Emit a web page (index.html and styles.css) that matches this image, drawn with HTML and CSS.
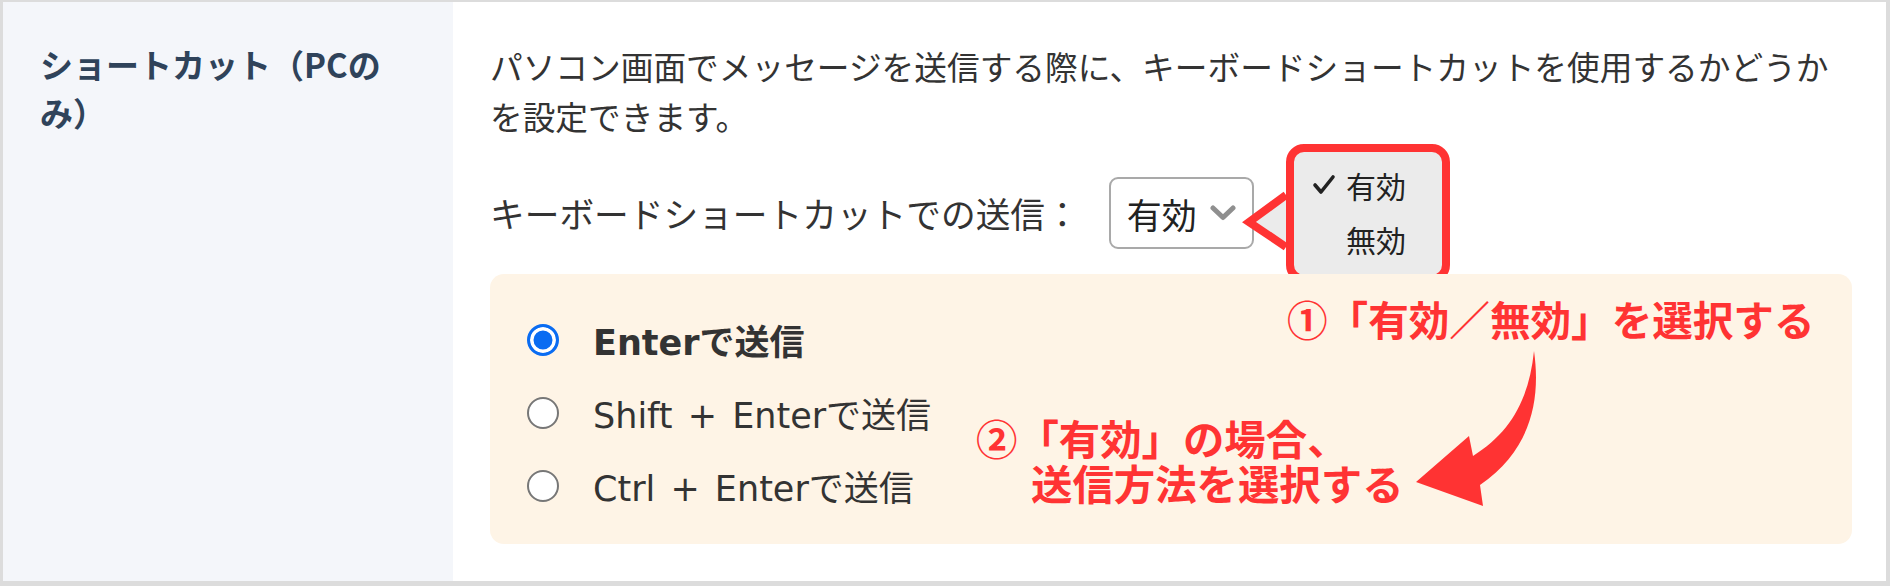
FILE: index.html
```html
<!DOCTYPE html>
<html lang="ja">
<head>
<meta charset="utf-8">
<title>ショートカット設定</title>
<link rel="stylesheet" href="styles.css">
</head>
<body>
<div class="frame">
  <div class="side">
    <h2 class="side-title">ショートカット（PCのみ）</h2>
  </div>
  <div class="main">
    <p class="desc">パソコン画面でメッセージを送信する際に、キーボードショートカットを使用するかどうかを設定できます。</p>
    <div class="field">
      <span class="field-label">キーボードショートカットでの送信：</span>
      <div class="select">
        <span class="select-value">有効</span>
        <svg class="chevron" width="26" height="18" viewBox="0 0 26 18"><polyline points="3,4 13,13.5 23,4" fill="none" stroke="#8f8f8f" stroke-width="5" stroke-linecap="round" stroke-linejoin="round"/></svg>
      </div>
      <div class="menu">
        <svg class="menu-pointer" width="60" height="80" viewBox="0 0 60 80"><path d="M45 10 L8 37 L45 62 Z" fill="#ebebeb"/><polyline points="45,10 8,37 45,62" fill="none" stroke="#ff3333" stroke-width="8" stroke-linejoin="miter"/></svg>
        <div class="menu-item"><svg class="check" width="24" height="22" viewBox="0 0 24 22"><polyline points="3,11 9,18 21,3" fill="none" stroke="#222" stroke-width="3.6" stroke-linecap="round" stroke-linejoin="round"/></svg><span>有効</span></div>
        <div class="menu-item"><span class="check-space"></span><span>無効</span></div>
      </div>
    </div>
    <div class="options">
      <label class="option option-selected"><input type="radio" name="send" checked><span>Enterで送信</span></label>
      <label class="option"><input type="radio" name="send"><span>Shift + Enterで送信</span></label>
      <label class="option"><input type="radio" name="send"><span>Ctrl + Enterで送信</span></label>
      <p class="note note-one">①「有効／無効」を選択する</p>
      <p class="note note-two"><span class="note-line">②「有効」の場合、</span><span class="note-line note-indent">送信方法を選択する</span></p>
      <svg class="arrow" width="140" height="170" viewBox="0 0 140 170"><path d="M124 6 C131 55 121 105 70 140 L73 161 L6 137 L59 91 L63 111 C100 88 119 55 124 6 Z" fill="#ff3333"/></svg>
    </div>
  </div>
</div>
</body>
</html>
```

FILE: styles.css
```css
* {
  box-sizing: border-box;
  margin: 0;
  padding: 0;
}

html,
body {
  width: 1890px;
  height: 586px;
  overflow: hidden;
  background: #ffffff;
}

body {
  font-family: "Noto Sans CJK JP", sans-serif;
  color: #333333;
}

.frame {
  display: flex;
  width: 1890px;
  height: 586px;
  border-style: solid;
  border-color: #dcdcdc;
  border-width: 2px 4px 5px 3px;
}

.side {
  flex: 0 0 450px;
  background: #f4f6fa;
  padding: 38px 37px 0 37px;
}

.side-title {
  font-size: 33px;
  font-weight: 700;
  line-height: 48px;
  color: #2f435a;
}

.main {
  flex: 1;
  padding: 39px 34px 0 37px;
}

.desc {
  font-size: 32.7px;
  line-height: 50px;
  color: #333333;
}

.field {
  position: relative;
  display: flex;
  align-items: center;
  gap: 29px;
  margin-top: 36px;
  height: 72px;
}

.field-label {
  font-size: 34.7px;
  line-height: 72px;
  color: #333333;
}

.select {
  display: flex;
  align-items: center;
  width: 145px;
  height: 72px;
  border: 2px solid #a9a9a9;
  border-radius: 9px;
  background: #ffffff;
  padding-left: 16px;
}

.select-value {
  font-size: 35px;
  line-height: 1;
  color: #222222;
}

.chevron {
  margin-left: 13px;
}

.menu {
  position: absolute;
  left: 796px;
  top: -33px;
  width: 164px;
  height: 139px;
  border: 8px solid #ff3333;
  border-radius: 18px;
  background: #ebebeb;
  padding: 6px 0 0 18px;
}

.menu-pointer {
  position: absolute;
  left: -53px;
  top: 33px;
}

.menu-item {
  display: flex;
  align-items: center;
  height: 54px;
  font-size: 30px;
  color: #222222;
}

.check {
  margin-right: 10px;
}

.check-space {
  display: inline-block;
  width: 34px;
}

.options {
  position: relative;
  margin-top: 25px;
  height: 270px;
  background: #fef4e6;
  border-radius: 14px;
  padding: 29px 0 0 37px;
}

.option {
  display: flex;
  align-items: center;
  width: max-content;
  height: 73px;
  font-family: "DejaVu Sans", "Noto Sans CJK JP", sans-serif;
  font-size: 35px;
  word-spacing: 4px;
  color: #333333;
}

.option-selected {
  font-weight: 700;
}

.option input {
  appearance: none;
  -webkit-appearance: none;
  flex: 0 0 32px;
  width: 32px;
  height: 32px;
  margin: 0 34px 0 0;
  border: 2px solid #777777;
  border-radius: 50%;
  background: #ffffff;
}

.option input:checked {
  border: 3px solid #0a6cf2;
  background: #0a6cf2;
  box-shadow: inset 0 0 0 3.5px #ffffff;
}

.note {
  position: absolute;
  font-size: 40.6px;
  font-weight: 700;
  line-height: 45px;
  color: #ff3333;
  white-space: nowrap;
}

.note-one {
  left: 797px;
  top: 22px;
}

.note-two {
  left: 486px;
  top: 141px;
  font-size: 41.4px;
}

.note-line {
  display: block;
}

.note-indent {
  padding-left: 55px;
}

.arrow {
  position: absolute;
  left: 920px;
  top: 71px;
}
```
